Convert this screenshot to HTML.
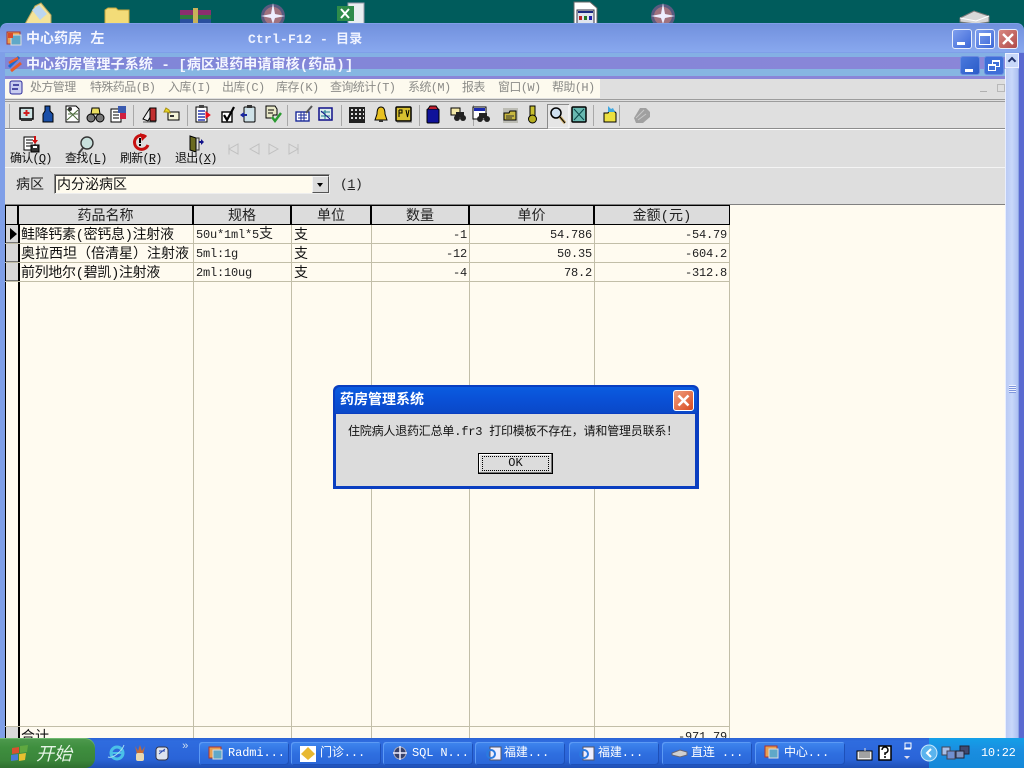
<!DOCTYPE html>
<html><head><meta charset="utf-8"><style>
html,body{margin:0;padding:0;width:1024px;height:768px;overflow:hidden;background:#005c5c}
body{position:relative;font-family:"Liberation Mono","WenQuanYi Zen Hei","Noto Sans CJK SC",monospace;font-size:12px;color:#000}
div,span{position:absolute;white-space:nowrap;box-sizing:border-box}
u{text-decoration:underline}
.t{font-size:13px;line-height:16px;letter-spacing:-.2px}
.m{top:81px;font-size:12px;line-height:14px;color:#8c8c88;letter-spacing:-.6px}
.tb{top:152px;font-size:12px;line-height:14px;color:#111;letter-spacing:-.8px}
.h{top:206px;height:18px;background:#dcdcdc;border-right:2px solid #000;text-align:center;font-size:14px;line-height:22px;color:#222;overflow:hidden}
.v{width:1px;top:225px;height:513px;background:#c2bea8}
.r{height:1px;left:5px;width:725px;background:#c2bea8}
.c{font-size:14px;line-height:22px;color:#111}
.n{font-size:12px;line-height:20px;color:#222;text-align:right;letter-spacing:-.2px}
.ind{left:6px;width:12px;height:18px;background:#d8d8d8;border-bottom:1px solid #777}
.task{top:742px;height:23px;width:90px;background:linear-gradient(#3f86ee,#2f6fe0 50%,#2a66d8);border-radius:3px;color:#fff;font-size:12px;line-height:22px;padding-left:29px;box-shadow:inset 1px 1px 0 #5c9af5,inset -1px -1px 0 #1e50b8;letter-spacing:-.1px}
.wb{border-radius:3px;border:1px solid #e8eefc}
</style></head><body>

<!-- desktop icons -->
<svg style="position:absolute;left:0;top:0" width="1024" height="24">
<path d="M25 24L35 6l6-3 10 12v9z" fill="#f4e39a" stroke="#b8a45a"/><path d="M32 10l7-5 8 9-7 6z" fill="#bcd6f0"/>
<path d="M105 24V10l3-2h8l2 2h11v14z" fill="#f3dc78" stroke="#c8a83e"/>
<rect x="180" y="10" width="31" height="5" fill="#8b2f6e"/><rect x="180" y="15" width="31" height="4" fill="#2f7a3e"/><rect x="180" y="19" width="31" height="5" fill="#2a4f9e"/><rect x="193" y="8" width="5" height="16" fill="#c9b25a"/>
<circle cx="273" cy="16" r="12" fill="#5a5a80"/><circle cx="273" cy="16" r="9" fill="#a0727e"/><path d="M273 3l2 11 10 2-10 2-2 6-2-6-10-2 10-2z" fill="#eef"/>
<rect x="348" y="3" width="16" height="21" fill="#e8eef0" stroke="#99a"/><rect x="337" y="6" width="17" height="15" fill="#2e8b4a"/><path d="M341 9l8 9m0-9l-8 9" stroke="#fff" stroke-width="2"/>
<path d="M574 2h16l7 6v16h-23z" fill="#fff" stroke="#666"/><rect x="577" y="10" width="17" height="14" fill="#dfe4ee" stroke="#334"/><rect x="578" y="11" width="15" height="2" fill="#1c2a80"/><rect x="579" y="16" width="3" height="4" fill="#b22"/><rect x="584" y="16" width="3" height="4" fill="#272"/><rect x="589" y="16" width="3" height="4" fill="#22a"/>
<circle cx="663" cy="16" r="12" fill="#5a5a80"/><circle cx="663" cy="16" r="9" fill="#a0727e"/><path d="M663 3l2 11 10 2-10 2-2 6-2-6-10-2 10-2z" fill="#eef"/>
<path d="M960 18l14-7 15 5v6l-13 2-16-2z" fill="#d8d8d8" stroke="#777"/><path d="M960 18l16 3 13-5" fill="none" stroke="#fff"/>
</svg>

<!-- outer window -->
<div style="left:0;top:23px;width:1024px;height:745px;background:#7f9fe8;border-radius:7px 7px 0 0"></div>
<div style="left:0;top:24px;width:1024px;height:28px;background:linear-gradient(#7191dd,#7d9ce6 50%,#88a8ee);border-radius:7px 7px 0 0"></div>
<div style="left:0;top:736px;width:5px;height:4px;background:#7f9fe8"></div>
<svg style="position:absolute;left:5px;top:30px" width="18" height="18"><rect x="2" y="2" width="13" height="12" fill="#e8a050" stroke="#a33"/><rect x="6" y="5" width="10" height="10" fill="#5fa8c8" stroke="#ddd"/><rect x="3" y="3" width="5" height="5" fill="#d84a2a"/></svg>
<div style="left:26px;top:32px;font-size:14px;line-height:16px;color:#f4f6ff;font-weight:bold">中心药房 左</div>
<div style="left:248px;top:32px;font-size:13px;line-height:16px;color:#eef2ff;font-weight:bold;letter-spacing:.2px">Ctrl-F12 - 目录</div>
<div class="wb" style="left:952px;top:29px;width:20px;height:20px;background:linear-gradient(135deg,#7f9fee,#3d68d8)"><div style="left:4px;top:12px;width:8px;height:3px;background:#fff"></div></div>
<div class="wb" style="left:975px;top:29px;width:20px;height:20px;background:linear-gradient(135deg,#7f9fee,#3d68d8)"><div style="left:3px;top:3px;width:12px;height:12px;border:1px solid #fff;border-top:3px solid #fff"></div></div>
<div class="wb" style="left:998px;top:29px;width:20px;height:20px;background:linear-gradient(135deg,#d88880,#b04a4a)"><svg style="position:absolute;left:3px;top:3px" width="12" height="12"><path d="M1 1l10 10M11 1L1 11" stroke="#fff" stroke-width="2.4"/></svg></div>

<!-- MDI child title -->
<div style="left:5px;top:53px;width:1000px;height:4px;background:#84b0e4"></div>
<div style="left:5px;top:57px;width:1000px;height:12px;background:linear-gradient(90deg,#7f86d8,#8a86d8)"></div>
<div style="left:5px;top:69px;width:1000px;height:7px;background:#86b6e2"></div>
<div style="left:5px;top:76px;width:1000px;height:3px;background:#8a86d8"></div>
<svg style="position:absolute;left:6px;top:55px" width="18" height="18"><path d="M3 12L13 2" stroke="#1e6ad0" stroke-width="3"/><path d="M3 8l9-5" stroke="#e85a2a" stroke-width="2.5"/><path d="M5 16l10-8" stroke="#e85a2a" stroke-width="3"/></svg>
<div style="left:26px;top:58px;font-size:14px;line-height:16px;color:#f4f6ff;font-weight:bold;letter-spacing:.1px">中心药房管理子系统 - [病区退药申请审核(药品)]</div>
<div class="wb" style="left:960px;top:56px;width:20px;height:19px;border-color:#6a8ae0;background:linear-gradient(135deg,#4a78dc,#2a5cc8)"><div style="left:4px;top:12px;width:8px;height:3px;background:#fff"></div></div>
<div class="wb" style="left:984px;top:56px;width:20px;height:19px;border-color:#6a8ae0;background:#3f6fd8"><div style="left:7px;top:3px;width:8px;height:7px;border:1px solid #fff;border-top-width:2px"></div><div style="left:3px;top:7px;width:8px;height:7px;border:1px solid #fff;border-top-width:2px;background:#3f6fd8"></div></div>

<!-- menu bar -->
<div style="left:5px;top:79px;width:1000px;height:50px;background:#dfdfdf"></div>
<div style="left:5px;top:79px;width:595px;height:19px;background:#fdfaee"></div>
<div style="left:5px;top:99px;width:1000px;height:1px;background:#9c9c9c"></div>
<div style="left:5px;top:101px;width:1000px;height:1px;background:#9c9c9c"></div>
<svg style="position:absolute;left:8px;top:80px" width="16" height="16"><rect x="2" y="1" width="12" height="13" rx="2" fill="#c8ccf0" stroke="#2a2a9a"/><path d="M5 5h6M4 9h6" stroke="#22228a" stroke-width="1.5"/></svg>
<div class="m" style="left:30px">处方管理</div>
<div class="m" style="left:90px">特殊药品(B)</div>
<div class="m" style="left:168px">入库(I)</div>
<div class="m" style="left:222px">出库(C)</div>
<div class="m" style="left:276px">库存(K)</div>
<div class="m" style="left:330px">查询统计(T)</div>
<div class="m" style="left:408px">系统(M)</div>
<div class="m" style="left:462px">报表</div>
<div class="m" style="left:498px">窗口(W)</div>
<div class="m" style="left:552px">帮助(H)</div>
<div style="left:980px;top:91px;width:7px;height:1px;background:#b0b0b0"></div>
<div style="left:997px;top:84px;width:8px;height:8px;border:1px solid #b8b8b8"></div>

<!-- toolbar 1 -->
<div style="left:5px;top:128px;width:1000px;height:1px;background:#8c8c8c"></div>
<div style="left:5px;top:129px;width:1000px;height:1px;background:#fff"></div>
<div style="left:5px;top:130px;width:1000px;height:74px;background:#dedede"></div>
<div style="left:5px;top:167px;width:1000px;height:1px;background:#f4f4f4"></div>
<svg style="position:absolute;left:0;top:100px" width="660" height="30">
<g stroke="#a8a8a8"><path d="M9.5 4v24M133.5 5v21M187.5 5v21M287.5 5v21M341.5 5v21M419.5 5v21M473.5 5v21M593.5 5v21M619.5 5v21"/></g>
<!-- 1 -->
<rect x="20" y="8" width="13" height="11" fill="#cfe6e6" stroke="#000" stroke-width="1.5"/><path d="M26.5 10v6M23.5 13h6" stroke="#d02020" stroke-width="2"/><rect x="21" y="19" width="11" height="2" fill="#333"/>
<!-- 2 bottle -->
<path d="M45 11V6h5v5l3 3v8H43v-8z" fill="#1a4fa8" stroke="#000"/>
<!-- 3 -->
<path d="M66 6h10l3 3v13H66z" fill="#fff" stroke="#000"/><path d="M67 9l11 11M78 10L67 20M68 14h10" stroke="#4a6a3a"/><circle cx="70" cy="9" r="2" fill="#333"/>
<!-- 4 binoculars -->
<circle cx="91" cy="18" r="4" fill="#777" stroke="#000"/><circle cx="100" cy="18" r="4" fill="#777" stroke="#000"/><path d="M92 8h7l1 6h-9z" fill="#ecdf60" stroke="#000"/>
<!-- 5 -->
<rect x="111" y="9" width="10" height="13" fill="#fff" stroke="#000"/><path d="M113 12h6M113 15h6M113 18h6" stroke="#000"/><rect x="118" y="6" width="8" height="7" fill="#3a5ab0"/><rect x="120" y="13" width="6" height="6" fill="#d02040"/>
<!-- 6 -->
<path d="M143 19l7-11 4 2-6 11z" fill="#eee" stroke="#000"/><rect x="150" y="8" width="6" height="13" fill="#c23030" stroke="#000"/><path d="M143 22h13" stroke="#555"/>
<!-- 7 -->
<rect x="168" y="12" width="11" height="8" fill="#f3f3d8" stroke="#000"/><path d="M166 8l3 2 1 3-3-1-3 0z" fill="#e8d820" stroke="#a89010"/><rect x="170" y="15" width="4" height="2" fill="#333"/>
<!-- 8 -->
<rect x="196" y="7" width="11" height="15" fill="#fff" stroke="#000"/><path d="M198 11h7M198 14h7M198 17h7M198 20h7" stroke="#2a3ab0" stroke-width="1.5"/><rect x="199" y="5" width="5" height="3" fill="#444"/><path d="M206 12l4 3-4 3z" fill="#e81020" stroke="#e81020"/>
<!-- 9 check -->
<rect x="222" y="12" width="10" height="10" fill="#fff" stroke="#000" stroke-width="1.4"/><path d="M224 15l3 5 7-13" fill="none" stroke="#000" stroke-width="2.2"/>
<!-- 10 -->
<rect x="244" y="7" width="11" height="15" rx="1" fill="#cfe2e8" stroke="#000"/><rect x="247" y="5" width="5" height="3" fill="#333"/><path d="M241 15h6" stroke="#1a2aa0" stroke-width="2"/><path d="M244 12l-4 3 4 3z" fill="#1a2aa0"/>
<!-- 11 -->
<path d="M266 6h9l2 3v6h-4v3h-7z" fill="#e8e8c8" stroke="#000"/><path d="M268 10h6M268 13h5" stroke="#000"/><path d="M272 17l3 4 6-8" fill="none" stroke="#2a9a30" stroke-width="2.4"/>
<!-- 12 -->
<rect x="296" y="12" width="13" height="9" fill="#fff" stroke="#1a2a9a" stroke-width="1.4"/><path d="M298 15h9M298 18h9M301 12v9M304 12v9" stroke="#1a2a9a"/><path d="M306 13l6-7" stroke="#555" stroke-width="2"/>
<!-- 13 -->
<rect x="319" y="8" width="13" height="12" fill="#dcecec" stroke="#10108a" stroke-width="1.5"/><path d="M321 12h9M321 16h9M325 10v9" stroke="#1a7a8a"/><path d="M321 11l9 8" stroke="#10108a"/>
<!-- 14 dots -->
<rect x="349" y="7" width="16" height="16" fill="#222"/><g fill="#ddd"><rect x="351" y="9" width="2" height="2"/><rect x="355" y="9" width="2" height="2"/><rect x="359" y="9" width="2" height="2"/><rect x="363" y="9" width="1" height="2"/><rect x="351" y="13" width="2" height="2"/><rect x="355" y="13" width="2" height="2"/><rect x="359" y="13" width="2" height="2"/><rect x="363" y="13" width="1" height="2"/><rect x="351" y="17" width="2" height="2"/><rect x="355" y="17" width="2" height="2"/><rect x="359" y="17" width="2" height="2"/><rect x="363" y="17" width="1" height="2"/></g>
<!-- 15 bell -->
<path d="M381 7c-3 0-4 3-4 7l-2 6h12l-2-6c0-4-1-7-4-7z" fill="#e8c020" stroke="#000"/><rect x="379" y="20" width="4" height="2" fill="#333"/>
<!-- 16 PV -->
<rect x="396" y="7" width="15" height="14" rx="1" fill="#d8c030" stroke="#000" stroke-width="1.5"/><path d="M399 10v7M399 10h3v3h-3M406 10l1.500 7 1.500-7" fill="none" stroke="#000"/><path d="M397 22h15" stroke="#666"/>
<!-- 17 jar -->
<rect x="427" y="9" width="12" height="14" rx="1" fill="#10129a" stroke="#000"/><path d="M428 9l2-3h6l2 3" fill="#c02030" stroke="#000"/>
<!-- 18 -->
<path d="M451 8h9v7h-9z" fill="#f3e8a8" stroke="#000"/><circle cx="457" cy="18" r="3" fill="#222"/><circle cx="463" cy="18" r="3" fill="#222"/><rect x="456" y="12" width="8" height="5" fill="#222"/>
<!-- 19 -->
<rect x="473" y="7" width="13" height="12" fill="#fff" stroke="#000"/><rect x="474" y="8" width="11" height="3" fill="#1a2ab0"/><circle cx="480" cy="19" r="3" fill="#222"/><circle cx="487" cy="19" r="3" fill="#222"/><rect x="479" y="13" width="8" height="5" fill="#222"/>
<!-- 20 -->
<rect x="503" y="8" width="15" height="15" fill="#bcbcb4"/><path d="M504 13h5l1-2h6v9h-12z" fill="#c8b840" stroke="#000"/><path d="M506 16h8M506 18h6" stroke="#333"/>
<!-- 21 key -->
<rect x="530" y="6" width="5" height="11" fill="#c8c030" stroke="#000"/><circle cx="532.500" cy="19" r="4" fill="#b8b020" stroke="#000"/>
<!-- 22 search pressed -->
<rect x="547" y="4" width="22" height="24" fill="#e6e6e6"/><path d="M547.500 28V4.500H569" fill="none" stroke="#8a8a8a"/><path d="M569 5v23H548" fill="none" stroke="#fff"/><circle cx="556" cy="13" r="5" fill="#cfe0f0" stroke="#000" stroke-width="1.5"/><path d="M560 17l5 6" stroke="#c8a860" stroke-width="3"/><path d="M560 17l5 6" stroke="#000" stroke-width="1"/>
<!-- 23 X box -->
<rect x="572" y="7" width="14" height="15" rx="1" fill="#68b8b0" stroke="#000" stroke-width="1.5"/><path d="M574 9l10 11M584 9l-10 11" stroke="#0a4a4a"/>
<!-- 24 -->
<path d="M604 13h4l1-2h5l2 2v9h-12z" fill="#ece040" stroke="#000"/><path d="M608 6l3 3 2-1 2 4-7 0z" fill="#40a8e0"/>
<!-- 25 disabled -->
<path d="M634 18l6-10h6l4 4v5l-7 6h-7z" fill="#a0a0a0"/><path d="M636 18l8-8M638 20l8-6" stroke="#c8c8c8"/>
</svg>

<!-- toolbar 2 icons -->
<svg style="position:absolute;left:0;top:132px" width="320" height="24">
<rect x="24" y="5" width="11" height="13" fill="#fff" stroke="#000"/><path d="M26 8h7M26 11h7M26 14h5" stroke="#000"/><path d="M35 4v6" stroke="#d01010" stroke-width="2"/><path d="M32 8l3 4 3-4z" fill="#d01010"/><rect x="31" y="13" width="8" height="7" fill="#333" stroke="#000"/><rect x="33" y="14" width="4" height="2" fill="#fff"/>
<circle cx="87" cy="11" r="6" fill="#c8e0dc" stroke="#333" stroke-width="1.4"/><path d="M83 16l-4 5" stroke="#444" stroke-width="2"/>
<path d="M146 5a7 7 0 1 0 2 8" fill="none" stroke="#c81010" stroke-width="3"/><path d="M140 1l7 3-5 5z" fill="#c81010"/><rect x="139" y="6" width="2" height="5" fill="#000"/><rect x="139" y="12" width="2" height="2" fill="#000"/>
<path d="M190 4l6 2v14l-6-2z" fill="#6a6a20" stroke="#000"/><path d="M196 6h3v12h-3" fill="none" stroke="#333"/><path d="M199 10h3" stroke="#10108a" stroke-width="2"/><path d="M201 7l3 3-3 3z" fill="#10108a"/>
<g fill="none" stroke="#c0c0c0"><path d="M229 14.500v10M229 19l9-5v10z" transform="translate(0,-2)"/><path d="M250 17l9-5v10z"/><path d="M269 12l9 5-9 5z"/><path d="M289 12l9 5-9 5zM298 12v10"/></g>
</svg>
<div class="tb" style="left:10px">确认(<u>Q</u>)</div>
<div class="tb" style="left:65px">查找(<u>L</u>)</div>
<div class="tb" style="left:120px">刷新(<u>R</u>)</div>
<div class="tb" style="left:175px">退出(<u>X</u>)</div>

<!-- filter row -->
<div style="left:16px;top:177px;font-size:14px;line-height:18px;color:#222">病区</div>
<div style="left:54px;top:174px;width:276px;height:20px;background:#fffbee;border:1px solid #888;border-right-color:#eee;border-bottom-color:#eee;box-shadow:inset 1px 1px 0 #444"></div>
<div style="left:57px;top:177px;font-size:14px;line-height:18px;color:#111">内分泌病区</div>
<div style="left:312px;top:176px;width:17px;height:17px;background:#dcdcdc;border:1px solid #555;border-top-color:#f4f4f4;border-left-color:#f4f4f4"><div style="left:4px;top:6px;width:0;height:0;border:3.500px solid transparent;border-top:4px solid #000;border-bottom:0"></div></div>
<div style="left:340px;top:176px;font-size:13px;line-height:17px;color:#222;letter-spacing:-.3px">(<u>1</u>)</div>

<!-- grid -->
<div style="left:5px;top:204px;width:1000px;height:534px;background:#fffbf0"></div>
<div style="left:5px;top:204px;width:1000px;height:1px;background:#808080"></div>
<div style="left:5px;top:205px;width:725px;height:20px;background:#000"></div>
<div class="h" style="left:6px;width:13px;top:206px"></div>
<div class="h" style="left:19px;width:175px">药品名称</div>
<div class="h" style="left:194px;width:98px">规格</div>
<div class="h" style="left:292px;width:80px">单位</div>
<div class="h" style="left:372px;width:98px">数量</div>
<div class="h" style="left:470px;width:125px">单价</div>
<div class="h" style="left:595px;width:135px;border-right:1px solid #000">金额(元)</div>
<div style="left:729px;top:205px;width:1px;height:20px;background:#000"></div>
<div style="left:5px;top:205px;width:1px;height:533px;background:#000"></div>
<div style="left:18px;top:225px;width:2px;height:513px;background:#000"></div>
<div class="v" style="left:193px"></div><div class="v" style="left:291px"></div><div class="v" style="left:371px"></div><div class="v" style="left:469px"></div><div class="v" style="left:594px"></div><div class="v" style="left:729px"></div>
<div class="r" style="top:243px"></div><div class="r" style="top:262px"></div><div class="r" style="top:281px"></div><div class="r" style="top:726px"></div>
<div class="ind" style="top:225px"></div><div class="ind" style="top:244px"></div><div class="ind" style="top:263px"></div><div class="ind" style="top:727px"></div>
<div style="left:10px;top:228px;width:0;height:0;border:6px solid transparent;border-left:7px solid #000;border-right:0"></div>
<div class="c" style="left:21px;top:225px;letter-spacing:-.35px">鲑降钙素(密钙息)注射液</div>
<div class="c" style="left:21px;top:244px">奥拉西坦（倍清星）注射液</div>
<div class="c" style="left:21px;top:263px;letter-spacing:-.35px">前列地尔(碧凯)注射液</div>
<div class="n" style="left:196px;top:225px;text-align:left">50u*1ml*5<span style="position:static;font-size:14px">支</span></div>
<div class="n" style="left:196px;top:244px;text-align:left">5ml:1g</div>
<div class="n" style="left:196px;top:263px;text-align:left">2ml:10ug</div>
<div class="c" style="left:294px;top:225px">支</div><div class="c" style="left:294px;top:244px">支</div><div class="c" style="left:294px;top:263px">支</div>
<div class="n" style="left:372px;width:95px;top:225px">-1</div><div class="n" style="left:372px;width:95px;top:244px">-12</div><div class="n" style="left:372px;width:95px;top:263px">-4</div>
<div class="n" style="left:470px;width:122px;top:225px">54.786</div><div class="n" style="left:470px;width:122px;top:244px">50.35</div><div class="n" style="left:470px;width:122px;top:263px">78.2</div>
<div class="n" style="left:595px;width:132px;top:225px">-54.79</div><div class="n" style="left:595px;width:132px;top:244px">-604.2</div><div class="n" style="left:595px;width:132px;top:263px">-312.8</div>
<div class="c" style="left:21px;top:727px">合计</div>
<div class="n" style="left:595px;width:132px;top:727px">-971.79</div>

<!-- scrollbar -->
<div style="left:1005px;top:53px;width:14px;height:685px;background:linear-gradient(90deg,#b8c8f4,#c8d8fa,#a8bcf0)"></div>
<div style="left:1005px;top:53px;width:14px;height:15px;background:#c8d8fa;border:1px solid #eef2ff"><div style="left:3px;top:4px;width:6px;height:6px;border-left:2px solid #20306a;border-top:2px solid #20306a;transform:rotate(45deg)"></div></div>
<div style="left:1005px;top:69px;width:14px;height:669px;border-left:1px solid #e8eeff;border-right:1px solid #8ca4e4"></div>
<div style="left:1009px;top:385px;width:7px;height:8px;background:repeating-linear-gradient(#eef2ff 0 1px,#7f96dc 1px 2px)"></div>
<div style="left:1019px;top:53px;width:5px;height:685px;background:#5a6ad0"></div>

<!-- dialog -->
<div style="left:333px;top:385px;width:366px;height:104px;background:#0a3ec0;border-radius:6px 6px 0 0"></div>
<div style="left:335px;top:387px;width:362px;height:26px;background:linear-gradient(#0a5ce0,#0a52d8 40%,#0a48c8);border-radius:5px 5px 0 0"></div>
<div style="left:340px;top:393px;font-size:14px;line-height:16px;font-weight:bold;color:#fff">药房管理系统</div>
<div style="left:673px;top:390px;width:21px;height:21px;background:linear-gradient(135deg,#f0a080,#d84a20);border:1px solid #fff;border-radius:3px"><svg style="position:absolute;left:3px;top:3px" width="13" height="13"><path d="M1.500 1.500l10 10M11.500 1.500l-10 10" stroke="#fff" stroke-width="2.600"/></svg></div>
<div style="left:336px;top:414px;width:359px;height:72px;background:#dcdcdc"></div>
<div style="left:348px;top:424px;font-size:12px;line-height:16px;color:#111;letter-spacing:-.2px">住院病人退药汇总单.fr3 打印模板不存在，请和管理员联系！</div>
<div style="left:478px;top:453px;width:75px;height:21px;background:#dcdcdc;border:1px solid #000;box-shadow:inset -1px -1px 0 #777,inset 1px 1px 0 #fff"></div>
<div style="left:482px;top:456px;width:67px;height:15px;border:1px dotted #000;text-align:center;font-size:12px;line-height:13px;color:#111">OK</div>

<!-- taskbar -->
<div style="left:0;top:738px;width:1024px;height:30px;background:linear-gradient(#2a62d4 0,#2f6cdf 10%,#2a64d8 70%,#1e4eb4)"></div>
<div style="left:0;top:738px;width:95px;height:30px;background:linear-gradient(#4f9a4f,#3f8f3f 30%,#3a853a 75%,#2f6f2f);border-radius:0 10px 10px 0;box-shadow:inset 0 1px 0 #6fb86f"></div>
<svg style="position:absolute;left:9px;top:742px" width="22" height="22"><path d="M3 6l7-1v6l-7 1z" fill="#d85030"/><path d="M11 4l8-1-1 7-7 1z" fill="#60a840"/><path d="M2 13l7-1v6l-7 1z" fill="#4a7ad8"/><path d="M10 12l7-1-1 7-6 1z" fill="#e8c030"/></svg>
<div style="left:36px;top:741px;font-size:18px;line-height:24px;color:#e6f4e6;font-style:italic;font-family:'Noto Sans CJK SC',sans-serif">开始</div>
<svg style="position:absolute;left:105px;top:742px" width="90" height="22">
<circle cx="12" cy="11" r="6" fill="none" stroke="#4ac0e8" stroke-width="3"/><path d="M6 11h12" stroke="#4ac0e8" stroke-width="2"/><path d="M3 15c5 2 14-6 16-12" fill="none" stroke="#a8e0f4" stroke-width="1"/>
<path d="M30 4l2 8h6l2-8-3 5-2-6-2 6z" fill="#c86a30"/><rect x="31" y="11" width="8" height="8" rx="2" fill="#e8d8b0"/>
<rect x="51" y="5" width="12" height="13" rx="3" fill="#dde4f0" stroke="#334"/><path d="M54 12l6-5M54 9h6" stroke="#2a4ab0"/>
</svg>
<div style="left:182px;top:742px;font-size:11px;line-height:10px;color:#cde">»</div>
<div class="task" style="left:199px">Radmi...</div>
<div class="task" style="left:291px">门诊...</div>
<div class="task" style="left:383px">SQL N...</div>
<div class="task" style="left:475px">福建...</div>
<div class="task" style="left:569px">福建...</div>
<div class="task" style="left:662px">直连 ...</div>
<div class="task" style="left:755px">中心...</div>
<svg style="position:absolute;left:0;top:742px" width="860" height="24">
<rect x="209" y="5" width="12" height="11" fill="#e8a050" stroke="#a33"/><rect x="213" y="8" width="9" height="9" fill="#5fa8c8" stroke="#ddd"/>
<rect x="300" y="4" width="16" height="16" fill="#fff"/><path d="M301 12l7-7 7 7-7 6z" fill="#e8b830"/>
<circle cx="400" cy="11" r="6" fill="#36406a" stroke="#aab"/><path d="M400 4v14M393 11h14" stroke="#eef" stroke-width="1.500"/>
<rect x="490" y="5" width="11" height="13" fill="#eef" stroke="#556"/><circle cx="491" cy="12" r="4" fill="none" stroke="#2a7ae0" stroke-width="2"/>
<rect x="583" y="5" width="11" height="13" fill="#eef" stroke="#556"/><circle cx="584" cy="12" r="4" fill="none" stroke="#2a7ae0" stroke-width="2"/>
<path d="M672 11l8-3 7 2v3l-7 2-8-2z" fill="#d0d0d0" stroke="#667"/>
<rect x="765" y="4" width="12" height="11" fill="#e8a050" stroke="#a33"/><rect x="769" y="7" width="9" height="9" fill="#5fa8c8" stroke="#ddd"/>
</svg>
<div style="left:929px;top:738px;width:95px;height:30px;background:linear-gradient(#14a0e8,#1a8ee0 40%,#1488d8)"></div>
<svg style="position:absolute;left:850px;top:740px" width="174" height="26">
<rect x="7" y="11" width="15" height="9" fill="#eee" stroke="#000"/><path d="M9 13h11M9 15h11M9 17h11" stroke="#555"/><path d="M15 11V8" stroke="#ddd"/>
<rect x="29" y="6" width="12" height="14" fill="#fff" stroke="#000" stroke-width="1.500"/><path d="M32 10a3 3 0 1 1 3 3v2M35 16v2" fill="none" stroke="#000" stroke-width="1.500"/>
<rect x="55" y="3" width="6" height="5" fill="none" stroke="#fff"/><path d="M54 9h7" stroke="#fff"/><path d="M54 16h6l-3 3z" fill="#dde"/>
<circle cx="79" cy="13" r="8" fill="#5ab4ee" stroke="#c8e8fa"/><path d="M81 9l-4 4 4 4" fill="none" stroke="#fff" stroke-width="2"/>
<rect x="92" y="7" width="8" height="8" fill="#a8c0e8" stroke="#445"/><rect x="97" y="11" width="8" height="8" fill="#7090d0" stroke="#445"/>
<rect x="110" y="6" width="9" height="8" fill="#404a70" stroke="#223"/><rect x="106" y="11" width="8" height="7" fill="#8094c0" stroke="#223"/>
</svg>
<div style="left:981px;top:745px;font-size:12px;line-height:16px;color:#fff;letter-spacing:-.3px">10:22</div>
</body></html>
